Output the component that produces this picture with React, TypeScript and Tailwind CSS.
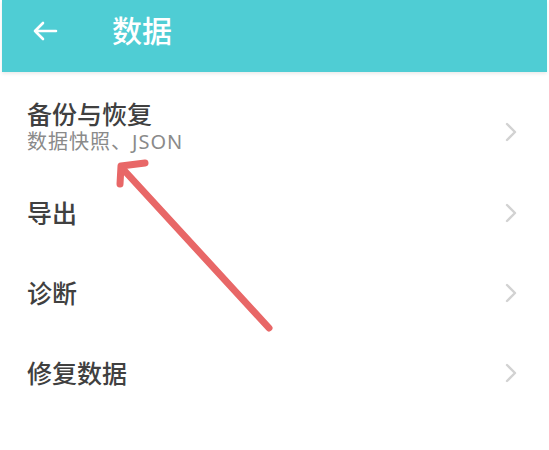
import { ChevronRight } from "lucide-react";

const ITEMS = [
  { title: "备份与恢复", sub: "数据快照、JSON" },
  { title: "导出" },
  { title: "诊断" },
  { title: "修复数据" },
];

export default function App() {
  return (
    <div
      className="relative w-[549px] h-[450px] bg-white overflow-hidden"
      style={{ fontFamily: '"Noto Sans", "Noto Sans CJK SC", sans-serif' }}
    >
      <header className="mx-[2px] h-[72px] bg-[#4fcdd4] flex items-center shadow-[0_2px_3px_rgba(0,0,0,0.08)]">
        <svg className="ml-[30px] mb-[10px]" width="26" height="20" viewBox="0 0 26 20" fill="none">
          <path d="M24 10H3M11 2L3 10l8 8" stroke="white" strokeWidth="2.6" strokeLinecap="round" strokeLinejoin="round" />
        </svg>
        <h1 className="ml-[54px] mb-[10px] text-[30px] font-medium text-white leading-none">数据</h1>
      </header>

      <ul className="mt-[18px]">
        {ITEMS.map((item, i) => (
          <li
            key={item.title}
            className={`flex items-center pl-[27px] pr-[22px] ${i === 0 ? "h-[83px]" : "h-[80px]"}`}
          >
            <div className={`flex-1 ${i === 0 ? "-mt-[12px]" : ""}`}>
              <div className="text-[25px] font-medium text-[#404040] leading-[32px]">{item.title}</div>
              {item.sub && (
                <div className="text-[20px] text-[#8a8a8a] leading-[24px] tracking-[1px]">{item.sub}</div>
              )}
            </div>
            <ChevronRight className="text-[#d2d2d2]" size={32} strokeWidth={1.8} />
          </li>
        ))}
      </ul>

      <svg className="absolute left-0 top-0 pointer-events-none" width="549" height="450">
        <g stroke="#e86767" strokeWidth="7" strokeLinecap="round" strokeLinejoin="round" fill="none">
          <path d="M269 328L122 168" />
          <path d="M145 163L121 166L120 184" />
        </g>
      </svg>
    </div>
  );
}
